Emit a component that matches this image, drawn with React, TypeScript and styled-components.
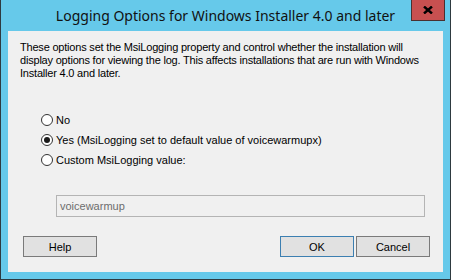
import React, { useState } from "react";
import styled, { createGlobalStyle } from "styled-components";

const Global = createGlobalStyle`
  html, body { margin: 0; padding: 0; background: #ffffff; }
  body { font-family: "Liberation Sans", Arial, sans-serif; }
  * { box-sizing: border-box; }
`;

const Window = styled.div`
  width: 451px;
  height: 280px;
  background: #66c9ea;
  border: 1px solid #2e3a40;
  border-top: none;
  display: flex;
  flex-direction: column;
`;

const TitleBar = styled.div`
  height: 31px;
  display: grid;
  grid-template-columns: 1fr auto 1fr;
  align-items: start;
`;

const Title = styled.div`
  grid-column: 2;
  font-family: "Noto Sans", "Open Sans", sans-serif;
  font-size: 14px;
  line-height: 20px;
  padding-top: 6px;
  color: #111;
  white-space: nowrap;
`;

const CloseButton = styled.div`
  grid-column: 3;
  justify-self: end;
  margin-right: 5px;
  width: 34px;
  height: 21px;
  background: #c75050;
  border: 1px solid #4a3030;
  border-top: none;
  display: flex;
  align-items: center;
  justify-content: center;
`;

const Client = styled.div`
  flex: 1;
  margin: 0 7px 7px 7px;
  background: #f0f0f0;
  display: flex;
  flex-direction: column;
  padding: 10px 13px 15px 12px;
  font-size: 11px;
  color: #000;
`;

const Description = styled.p`
  margin: 0;
  line-height: 13px;
  letter-spacing: -0.2px;
  white-space: nowrap;
`;

const RadioGroup = styled.div`
  margin-top: 30px;
  margin-left: 21px;
  display: flex;
  flex-direction: column;
`;

const RadioRow = styled.label`
  height: 20px;
  display: flex;
  align-items: center;
  gap: 3px;
`;

const RadioCircle = styled.span<{ $checked: boolean }>`
  width: 12px;
  height: 12px;
  border-radius: 50%;
  border: 1px solid #333;
  background: #fff;
  display: flex;
  align-items: center;
  justify-content: center;
  &::after {
    content: "";
    width: 6px;
    height: 6px;
    border-radius: 50%;
    background: ${(p) => (p.$checked ? "#1a1a1a" : "transparent")};
  }
`;

const TextBox = styled.div`
  margin-top: 25px;
  margin-left: 36px;
  margin-right: 5px;
  height: 22px;
  border: 1px solid #b4b4b4;
  background: #f0f0f0;
  color: #6d6d6d;
  padding-left: 3px;
  display: flex;
  align-items: center;
`;

const ButtonRow = styled.div`
  margin-top: auto;
  display: flex;
  gap: 2px;
  padding-left: 3px;
`;

const Spacer = styled.div`
  flex: 1;
`;

const Button = styled.div<{ $default?: boolean }>`
  width: 74px;
  height: 21px;
  background: #e1e1e1;
  border: 1px solid ${(p) => (p.$default ? "#3c7fb1" : "#7a7a7a")};
  display: flex;
  align-items: center;
  justify-content: center;
  font-size: 11px;
`;

const options = [
  "No",
  "Yes (MsiLogging set to default value of voicewarmupx)",
  "Custom MsiLogging value:",
];

export default function App() {
  const [sel, setSel] = useState(1);
  return (
    <>
      <Global />
      <Window>
        <TitleBar>
          <Title>Logging Options for Windows Installer 4.0 and later</Title>
          <CloseButton>
            <svg width="10" height="8" viewBox="0 0 10 8">
              <path d="M1 0.5 L9 7.5 M9 0.5 L1 7.5" stroke="#000" strokeWidth="2.4" />
            </svg>
          </CloseButton>
        </TitleBar>
        <Client>
          <Description>
            These options set the MsiLogging property and control whether the installation will
            <br />
            display options for viewing the log. This affects installations that are run with Windows
            <br />
            Installer 4.0 and later.
          </Description>
          <RadioGroup>
            {options.map((o, i) => (
              <RadioRow key={o} onClick={() => setSel(i)}>
                <RadioCircle $checked={sel === i} />
                {o}
              </RadioRow>
            ))}
          </RadioGroup>
          <TextBox>voicewarmup</TextBox>
          <ButtonRow>
            <Button>Help</Button>
            <Spacer />
            <Button $default>OK</Button>
            <Button>Cancel</Button>
          </ButtonRow>
        </Client>
      </Window>
    </>
  );
}
